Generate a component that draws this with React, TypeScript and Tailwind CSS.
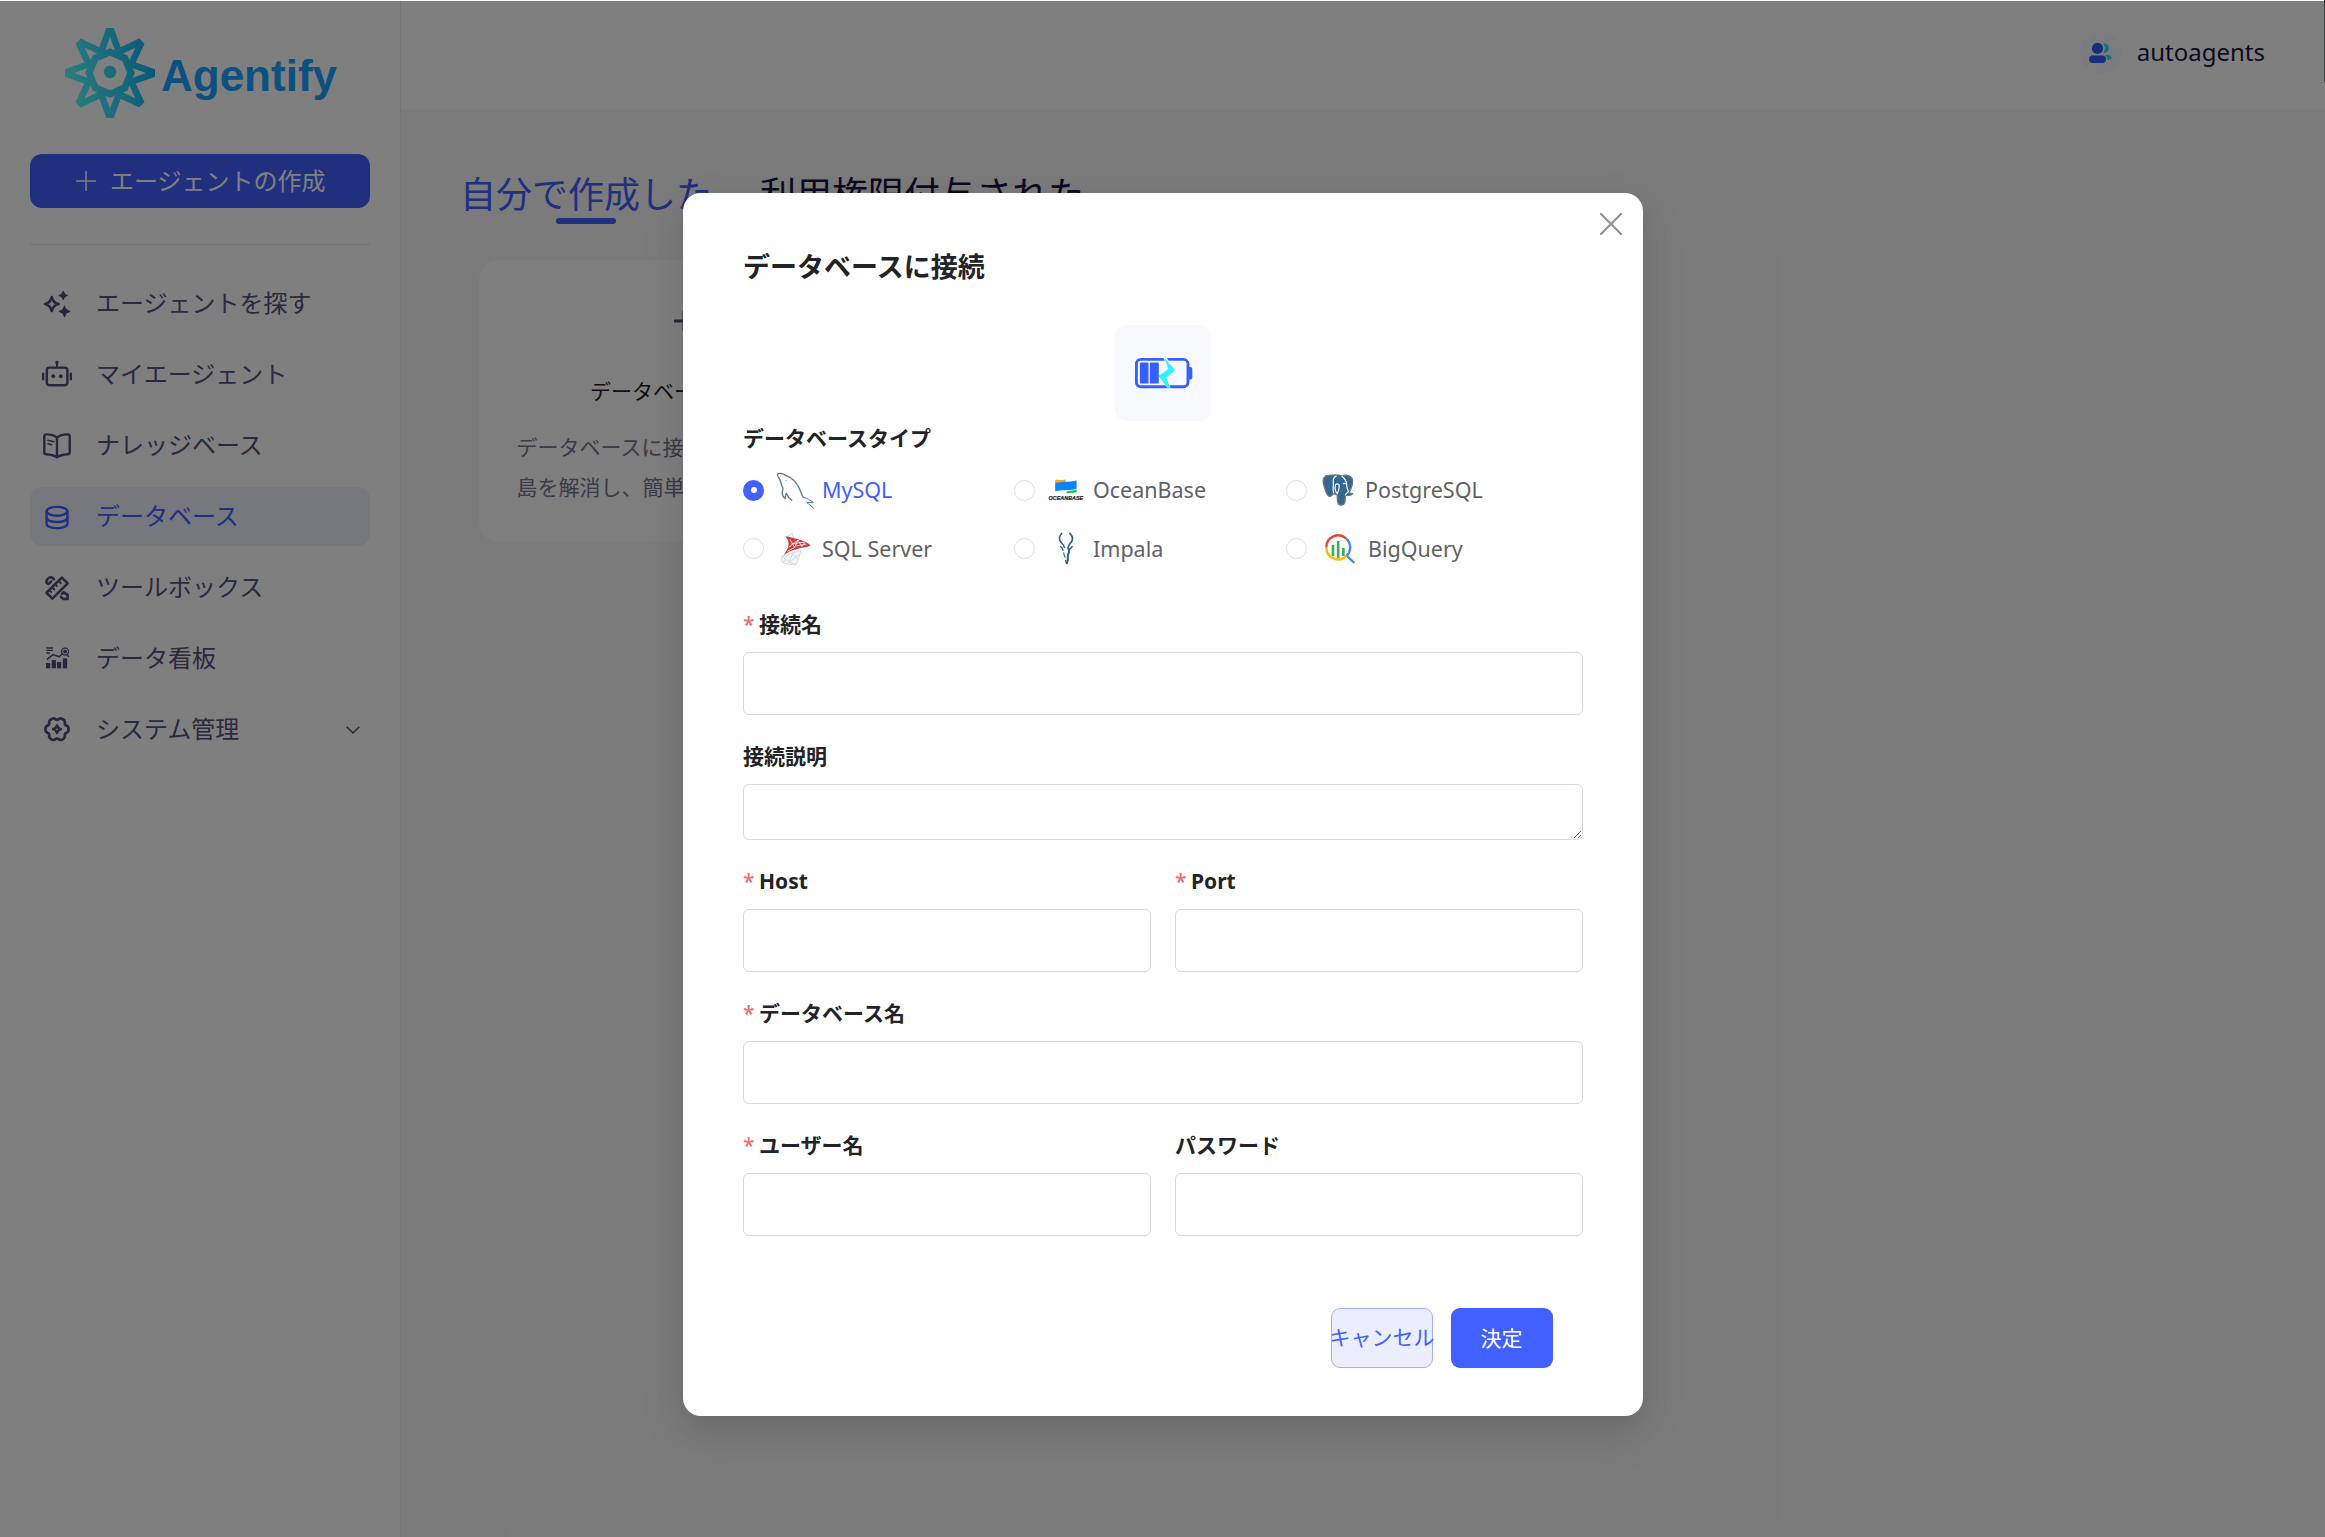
import type { ReactNode } from "react";

const INK = "#504e72";

/* ---------- brand ---------- */

function GearLogo() {
  const spokes = [0, 45, 90, 135, 180, 225, 270, 315];
  return (
    <svg width="90" height="90" viewBox="-45 -45 90 90" fill="none">
      <defs>
        <linearGradient id="gear" gradientUnits="userSpaceOnUse" x1="-45" y1="10" x2="45" y2="-10">
          <stop offset="0" stopColor="#58fcff" />
          <stop offset="1" stopColor="#0eb2f2" />
        </linearGradient>
        <mask id="gearMask" maskUnits="userSpaceOnUse" x="-45" y="-45" width="90" height="90">
          <g stroke="#fff" strokeWidth="6.6" fill="none">
            {spokes.map((a) => (
              <path key={a} transform={`rotate(${a})`} d="M-10 -18 L-1.4 -41.8 H1.4 L10 -18" />
            ))}
            <path
              strokeWidth="7"
              d="M0 -21 L14.8 -14.8 L21 0 L14.8 14.8 L0 21 L-14.8 14.8 L-21 0 L-14.8 -14.8 Z"
            />
          </g>
          <circle cy="-1" r="6.2" fill="#fff" />
        </mask>
      </defs>
      <rect x="-45" y="-45" width="90" height="90" fill="url(#gear)" mask="url(#gearMask)" />
    </svg>
  );
}

/* ---------- sidebar icons (30px box) ---------- */

function Icon({ children, color = INK }: { children: ReactNode; color?: string }) {
  return (
    <svg
      width="30"
      height="30"
      viewBox="0 0 30 30"
      fill="none"
      stroke={color}
      strokeWidth="2.4"
      strokeLinecap="round"
      strokeLinejoin="round"
      className="shrink-0"
    >
      {children}
    </svg>
  );
}

const SparkleIcon = () => (
  <Icon>
    <path
      strokeWidth="2.8"
      d="M9.8 8.2 C10.6 12 12.4 13.9 16.6 15 C12.4 16.1 10.6 18 9.8 22 C9 18 7.2 16.1 3 15 C7.2 13.9 9 12 9.8 8.2Z"
    />
    <path
      fill={INK}
      strokeWidth="1.2"
      d="M21.2 2.4 C21.8 4.9 22.7 5.8 25.2 6.4 C22.7 7 21.8 7.900 21.2 10.400 C20.6 7.900 19.700 7 17.200 6.400 C19.700 5.800 20.600 4.900 21.200 2.400Z"
    />
    <path
      fill={INK}
      strokeWidth="1.4"
      d="M22.500 17.300 C23.300 20.400 24.500 21.600 27.700 22.400 C24.500 23.200 23.300 24.400 22.500 27.500 C21.700 24.400 20.500 23.200 17.300 22.400 C20.500 21.600 21.700 20.400 22.500 17.300Z"
    />
  </Icon>
);

const RobotIcon = () => (
  <Icon>
    <rect x="4.800" y="7.600" width="20.600" height="17.600" rx="2.600" />
    <path d="M15 2.500V7" strokeWidth="2" />
    <circle cx="15" cy="2.400" r="1.700" fill={INK} stroke="none" />
    <circle cx="11.200" cy="16.300" r="2" fill={INK} stroke="none" />
    <circle cx="18.800" cy="16.300" r="2" fill={INK} stroke="none" />
    <path d="M1.100 12.800V20.200M28.900 12.800V20.200" strokeLinecap="butt" />
  </Icon>
);

const BookIcon = () => (
  <Icon>
    <path d="M15 6.6 C12.5 4.4 8.5 3.4 4.4 3.4 C3 3.4 2.3 4 2.3 5.2 V21.4 C2.3 22.8 3 23.2 4.4 23.3 C8.5 23.6 12.2 24.4 15 26.2 C17.8 24.4 21.5 23.6 25.6 23.3 C27 23.2 27.7 22.8 27.7 21.4 V5.2 C27.7 4 27 3.4 25.6 3.4 C21.5 3.4 17.5 4.4 15 6.6Z V26" />
    <path d="M6 9.2L11.8 10.8M6 12.8L9.600 13.8" strokeWidth="1.6" />
  </Icon>
);

const DatabaseIcon = () => (
  <Icon color="#4060ff">
    <ellipse cx="15" cy="9.3" rx="10.4" ry="4.4" />
    <path d="M4.6 9.3V22C4.6 24.4 9.2 26.2 15 26.2S25.4 24.4 25.4 22V9.3" />
    <path d="M4.6 15.6C4.6 18.2 9.2 20 15 20S25.4 18.2 25.4 15.6" />
  </Icon>
);

const ToolsIcon = () => (
  <Icon>
    <path d="M19.8 4.6L25.7 10.4L10.400 25.6L4.4 19.8Z" strokeWidth="2.6" />
    <path d="M17 8.4L19 10.4M13.6 11.6L15 13M10.4 14.6L12.4 16.6M8 17.8L9.2 19" strokeWidth="1.9" />
    <path d="M10 4.4C7 3.6 4 6.8 4.4 9.400L6.4 11M10 4.400L12 6.200M9.200 8.400L7.600 10" strokeWidth="2.6" />
    <path d="M20 20.8L21.8 19.4L25.6 21.8V26H21L19 23.8" strokeWidth="2.6" />
  </Icon>
);

const BoardIcon = () => (
  <Icon>
    <g fill={INK} stroke="none">
      <rect x="4" y="19" width="4.2" height="5.3" />
      <rect x="9.7" y="16" width="4.2" height="8.3" />
      <rect x="15" y="18" width="4.2" height="6.3" />
      <rect x="20.8" y="14.4" width="4.3" height="9.9" />
    </g>
    <g strokeWidth="1.3">
      <path d="M4.4 4H11M4.4 6.4H11M4.4 9H8" strokeLinecap="butt" />
      <path d="M5.4 15.2L11 10.6L17.4 12.8L20.5 9.6" strokeWidth="1.5" />
      <circle cx="23" cy="7.6" r="3.5" />
      <circle cx="23" cy="7.6" r="1.3" fill={INK} />
      <path d="M25 10.4L26.6 12.6" />
    </g>
  </Icon>
);

const gearOutline =
  Array.from({ length: 120 }, (_, i) => {
    const t = (i / 120) * Math.PI * 2;
    const r = 10.7 + 1.1 * Math.cos(6 * t) - 0.3 * Math.cos(12 * t);
    return `${i ? "L" : "M"}${(15 + r * Math.cos(t)).toFixed(2)} ${(14.2 + r * Math.sin(t)).toFixed(2)}`;
  }).join("") + "Z";

const SettingsIcon = () => (
  <Icon>
    <path d={gearOutline} strokeWidth="2.7" />
    <path
      strokeWidth="2.4"
      d="M15 10.4C15.600 12.800 16.400 13.600 19 14.200C16.400 14.800 15.600 15.600 15 18C14.400 15.600 13.600 14.800 11 14.200C13.600 13.600 14.400 12.800 15 10.400Z"
    />
  </Icon>
);

/* ---------- database logos ---------- */

const MySqlLogo = () => (
  <svg width="39" height="37" viewBox="165 33 117 111" fill="none" stroke="#4f7f9e" strokeWidth="4" strokeLinejoin="round" strokeLinecap="round">
    <path d="M212 118C204 112 199 105 196 97C194 102 193 107 192 113C184 107 182 95 186 82C178 70 181 58 172 48C168 42 168 38 176 37C184 36 190 42 196 44C212 50 224 62 232 76C238 88 241 98 246 108" />
    <path d="M246 108C258 111 268 117 277 125C270 126 264 124 257 124C264 131 272 134 278 142" strokeWidth="3" />
    <circle cx="195" cy="58" r="1.6" fill="#4f7f9e" stroke="none" />
  </svg>
);

const OceanBaseLogo = () => (
  <svg width="36" height="24" viewBox="0 0 36 24">
    <path d="M7.2 2.2C10 .8 13.8 2.8 17.5 1.6V4.6C13.6 5.6 10.6 4.6 7.2 5Z" fill="#ff9f1a" />
    <path d="M7.2 5C14 3.4 20 4.6 28.6 2.6V11C20 13 14 11.4 7.2 13.2Z" fill="#0a84ff" />
    <path d="M18.6 13.6C22 12.4 25.4 12.6 28.6 11.4V14C25.4 15.4 22 14.6 18.6 15.6Z" fill="#12c35b" />
    <text
      x="0.6"
      y="21.8"
      fontFamily="Liberation Sans, sans-serif"
      fontSize="5.6"
      fontWeight="700"
      fontStyle="italic"
      textLength="34.6"
      lengthAdjust="spacingAndGlyphs"
      fill="#1b1b1b"
      stroke="#1b1b1b"
      strokeWidth=".2"
    >
      OCEANBASE
    </text>
  </svg>
);

const PostgresLogo = () => (
  <svg width="32" height="34" viewBox="965 40 97 100" strokeLinejoin="round" strokeLinecap="round">
    <g fill="#336791" stroke="#6f7478" strokeWidth="4">
      <path d="M985 46C972 46 967 55 969 68C972 84 978 104 986 109C991 112 996 106 1000 100C1003 103 1008 104 1011 103C1012 112 1010 124 1014 131C1019 139 1031 137 1034 128C1036 120 1035 112 1036 105C1044 108 1054 106 1058 101C1052 101 1048 100 1047 97C1054 85 1059 68 1057 57C1052 45 1036 43 1024 47C1012 42 999 44 985 46Z" />
    </g>
    <g fill="none" stroke="#fff" strokeWidth="3.6">
      <path d="M1000 98C996 88 1001 78 999 68C998 58 1003 50 1008 48" />
      <path d="M1012 101C1003 95 1004 84 1006 74C1011 70 1017 71 1017 77C1018 86 1014 92 1012 101" />
      <path d="M1026 49C1036 56 1040 68 1040 76C1040 84 1044 90 1045 95C1040 101 1037 100 1036 105" />
      <path d="M1030 71C1033 69 1038 70 1039 74" />
    </g>
  </svg>
);

const SqlServerLogo = () => (
  <svg width="31" height="34" viewBox="178 216 93 102" strokeLinejoin="round">
    <g fill="#f2f5f5" stroke="#c5ced0" strokeWidth="2">
      <path d="M198 230L214 219L220 234Z" />
      <path d="M184 288C200 284 226 274 240 272C237 288 232 304 226 314C212 314 192 312 184 306C181 300 181 294 184 288Z" />
      <path d="M184 290L206 306L216 280L232 300M206 306L226 314M200 284L188 308M206 306L236 284" fill="none" />
    </g>
    <path d="M194 229C214 234 250 238 270 256C262 264 214 264 188 287C202 268 212 248 194 229Z" fill="#cf3a3f" />
    <path d="M208 238L222 262L232 240L244 260L252 246M204 262L232 240M212 252L252 246M200 274L222 262M226 258L258 252" stroke="#fff" strokeWidth="2.4" fill="none" />
  </svg>
);

const ImpalaLogo = () => (
  <svg width="16" height="33" viewBox="174 218 47 98" fill="none" stroke="#2c638c" strokeLinecap="round" strokeLinejoin="round">
    <path d="M185 222C178 230 176 240 182 248C187 254 191 256 193 264" strokeWidth="4.500" />
    <path d="M209 222C217 230 219 240 213 248C208 254 205 256 204 264" strokeWidth="5" />
    <path d="M181 261C184 263 187 267 189 272M216 261C213 265 210 268 207 271" strokeWidth="4" />
    <path d="M204 266C208 272 208 278 203 286C204 296 203 304 200 311" strokeWidth="6" />
    <path d="M191 280C191 286 193 290 195 293M196 302L198 310" strokeWidth="3.5" />
  </svg>
);

const BigQueryLogo = () => (
  <svg width="30" height="31" viewBox="974 221 90 93" fill="none" strokeWidth="7">
    <path d="M978 263A35.5 35.5 0 0 1 1037 237" stroke="#ea4335" />
    <path d="M1037 237A35.5 35.5 0 0 1 1039 289L1062 311" stroke="#4a86f0" />
    <path d="M978 263A35.5 35.5 0 0 0 1039 289" stroke="#fbbc05" />
    <path d="M998 256V290M1013.500 245V296M1029 266V290" stroke="#3fae5c" strokeWidth="8" />
  </svg>
);

const BatteryLogo = () => (
  <svg width="58" height="32" viewBox="0 0 58 32" className="ml-px">
    <rect x="1.4" y="2.4" width="51.6" height="27.400" rx="4.500" fill="none" stroke="#3560ff" strokeWidth="2.900" />
    <path d="M53 10H55.500Q57.300 10 57.300 12V20.500Q57.300 22.400 55.500 22.400H53Z" fill="#3560ff" />
    <rect x="4.900" y="5.400" width="8.600" height="21.200" rx="1.200" fill="#3560ff" />
    <rect x="14.800" y="5.400" width="9" height="21.200" rx="1.200" fill="#3560ff" />
    <path d="M28 0H31L40.600 12.800L31.200 20.600L36 32H33L24 18.600L33.500 12Z" fill="#f7f9ff" />
    <path d="M29.400 1.200L40.200 13.200L31.200 20.600L35.300 31.200H33L23.600 19L33.400 12Z" fill="#2cf3ff" />
  </svg>
);

/* ---------- sidebar ---------- */

const nav = [
  { label: "エージェントを探す", icon: <SparkleIcon /> },
  { label: "マイエージェント", icon: <RobotIcon /> },
  { label: "ナレッジベース", icon: <BookIcon /> },
  { label: "データベース", icon: <DatabaseIcon />, active: true },
  { label: "ツールボックス", icon: <ToolsIcon /> },
  { label: "データ看板", icon: <BoardIcon /> },
  { label: "システム管理", icon: <SettingsIcon />, expandable: true },
];

function Sidebar() {
  return (
    <aside className="flex w-[401px] shrink-0 flex-col border-r border-[#ececec] bg-white px-[30px] pt-[27px]">
      <div className="flex h-[90px] items-center gap-[6px] pl-[35px]">
        <GearLogo />
        <span className="pt-[6px] font-['Liberation_Sans',sans-serif] text-[44px] leading-none font-bold text-[#16a2ff]">
          Agentify
        </span>
      </div>
      <button className="mt-9 flex h-[54px] w-[340px] items-center rounded-xl bg-[#4060ff] pl-[46px] text-2xl text-white">
        <svg width="20" height="20" viewBox="0 0 20 20" stroke="#fff" strokeWidth="1.5">
          <path d="M10 0V20M0 10H20" />
        </svg>
        <span className="ml-[14px]">エージェントの作成</span>
      </button>
      <div className="mt-9 h-px w-[340px] bg-[#e4e4e4]" />
      <nav className="mt-[29px] flex w-[340px] flex-col gap-3">
        {nav.map((n) => (
          <div
            key={n.label}
            className={
              n.active
                ? "flex h-[59px] items-center rounded-xl bg-[#eff1fc] pl-3 text-2xl text-[#4060ff]"
                : "flex h-[59px] items-center rounded-xl pl-3 text-2xl text-[#54527a]"
            }
          >
            {n.icon}
            <span className="ml-6 pb-px">{n.label}</span>
            {n.expandable && (
              <svg className="mr-[10px] ml-auto" width="14" height="8" viewBox="0 0 14 8" fill="none" stroke={INK} strokeWidth="1.5">
                <path d="M.7 .7L7 7L13.300 .7" />
              </svg>
            )}
          </div>
        ))}
      </nav>
    </aside>
  );
}

/* ---------- main ---------- */

function Main() {
  return (
    <div className="flex flex-1 flex-col bg-[#f7f7f7]">
      <header className="flex h-[108px] items-start justify-end bg-white pt-[31px] pr-[60px]">
        <div className="flex size-[42px] items-center justify-center rounded-full bg-[#f5f8fe]">
          <svg width="24" height="22" viewBox="0 0 24 22">
            <circle cx="8.500" cy="6.400" r="5.600" fill="#3358ff" />
            <rect x="0" y="13.600" width="17" height="7.400" rx="3.700" fill="#3358ff" />
            <path d="M14.300 1.500C18.400 1.200 20 4 20 6.200C20 9 17.500 11.200 14.200 10.600C16.400 8 16.400 4 14.300 1.500Z" fill="#2ae6ea" />
            <path d="M15.500 12.800C20 12.300 22.500 13.800 22.500 15.600C22.500 17.300 20.500 18.200 18.400 18C18.600 15.500 17.500 14 15.500 12.800Z" fill="#2ae6ea" />
          </svg>
        </div>
        <span className="ml-[15px] text-2xl leading-10 text-[#1a1442]">autoagents</span>
      </header>
      <div className="px-[59px] pt-[56px]">
        <div className="flex gap-12 text-4xl leading-[60px]">
          <div className="relative text-[#4060ff]">
            自分で作成した
            <span className="absolute top-[53px] left-1/2 h-1.5 w-[60px] -translate-x-1/2 rounded-full bg-[#4060ff]" />
          </div>
          <div className="text-[#1a1442]">利用権限付与された</div>
        </div>
        <div className="mt-[35px] ml-[19px] flex h-[282px] w-[410px] flex-col items-center rounded-[20px] bg-white pt-[50px] text-[21px]">
          <svg width="22" height="22" viewBox="0 0 22 22" stroke="#54527a" strokeWidth="3">
            <path d="M11 1V21M1 11H21" />
          </svg>
          <div className="mt-[42px] leading-[34px] text-[#1f1f24]">データベースに接続</div>
          <p className="mt-[19px] w-[335px] leading-10 text-[#77758f]">
            データベースに接続し、データ孤
            <br />
            島を解消し、簡単に分析できます
          </p>
        </div>
      </div>
    </div>
  );
}

/* ---------- dialog ---------- */

const types = [
  { label: "MySQL", logo: <MySqlLogo />, selected: true },
  { label: "OceanBase", logo: <OceanBaseLogo /> },
  { label: "PostgreSQL", logo: <PostgresLogo /> },
  { label: "SQL Server", logo: <SqlServerLogo /> },
  { label: "Impala", logo: <ImpalaLogo /> },
  { label: "BigQuery", logo: <BigQueryLogo />, wide: true },
];

function Field({ label, required, area }: { label: string; required?: boolean; area?: boolean }) {
  return (
    <label className="flex flex-1 flex-col">
      <span className="mb-[11px] flex h-[33px] items-center text-[21px] leading-[33px] font-bold text-[#222327]">
        {required && <span className="w-4 font-medium text-[#f56c6c]">*</span>}
        {label}
      </span>
      {area ? (
        <textarea className="h-14 w-full resize-y rounded-md border border-[#d6d9e1] bg-white outline-none" />
      ) : (
        <input className="h-[63px] w-full rounded-md border border-[#d6d9e1] bg-white outline-none" />
      )}
    </label>
  );
}

function Dialog() {
  return (
    <div className="relative h-[1223px] w-[960px] rounded-[18px] bg-white px-[60px] pt-[56px] shadow-[0_18px_48px_6px_rgba(0,0,0,0.06),0_12px_30px_rgba(0,0,0,0.08)]">
      <svg className="absolute top-5 right-[21px]" width="22" height="22" viewBox="0 0 22 22" stroke="#909399" strokeWidth="2.200" strokeLinecap="round">
        <path d="M1 1L21 21M21 1L1 21" />
      </svg>
      <h2 className="text-[27px] leading-9 font-bold text-[#222327]">データベースに接続</h2>
      <div className="mx-auto mt-10 flex size-24 items-center justify-center rounded-xl bg-[#f7f9ff]">
        <BatteryLogo />
      </div>
      <div className="text-[21px] leading-[34px] font-bold text-[#222327]">データベースタイプ</div>
      <div className="mt-[6px] grid grid-cols-[271px_272px_297px]">
        {types.map((t) => (
          <div key={t.label} className="flex h-[58.500px] items-center text-[21.500px]">
            {t.selected ? (
              <span className="flex size-[21px] items-center justify-center rounded-full bg-[#4060ff]">
                <span className="size-1.5 rounded-full bg-white" />
              </span>
            ) : (
              <span className="size-[21px] rounded-full border border-[#dcdfe6] bg-white" />
            )}
            <span className={t.wide ? "mr-px ml-[5px] flex w-[55px] justify-center" : "ml-1 flex w-[54px] justify-center"}>{t.logo}</span>
            <span className={t.selected ? "text-[#4060ff]" : "text-[#606266]"}>{t.label}</span>
          </div>
        ))}
      </div>
      <div className="mt-[30px] flex flex-col gap-[25px]">
        <Field label="接続名" required />
        <Field label="接続説明" area />
        <div className="flex gap-6">
          <Field label="Host" required />
          <Field label="Port" required />
        </div>
        <Field label="データベース名" required />
        <div className="flex gap-6">
          <Field label="ユーザー名" required />
          <Field label="パスワード" />
        </div>
      </div>
      <div className="mt-[72px] mr-[30px] flex justify-end gap-[18px] text-[21px]">
        <button className="flex h-[60px] w-[102px] items-center justify-center rounded-[9px] border border-[#a0b0ff] bg-[#ebeeff] whitespace-nowrap text-[#4060ff]">
          キャンセル
        </button>
        <button className="flex h-[60px] w-[102px] items-center justify-center rounded-[9px] bg-[#4060ff] pt-px pr-px text-white">決定</button>
      </div>
    </div>
  );
}

export default function App() {
  return (
    <div
      lang="ja"
      className="relative flex h-[1537px] w-full overflow-hidden bg-white pt-px font-['Noto_Sans','Noto_Sans_CJK_JP',sans-serif]"
    >
      <Sidebar />
      <Main />
      <div className="absolute inset-x-0 top-px bottom-0 flex items-start justify-center bg-black/50 pt-[192px] pl-px">
        <Dialog />
      </div>
      <div className="absolute top-0 right-0 h-[82px] w-px bg-[#3f4144]" />
    </div>
  );
}
